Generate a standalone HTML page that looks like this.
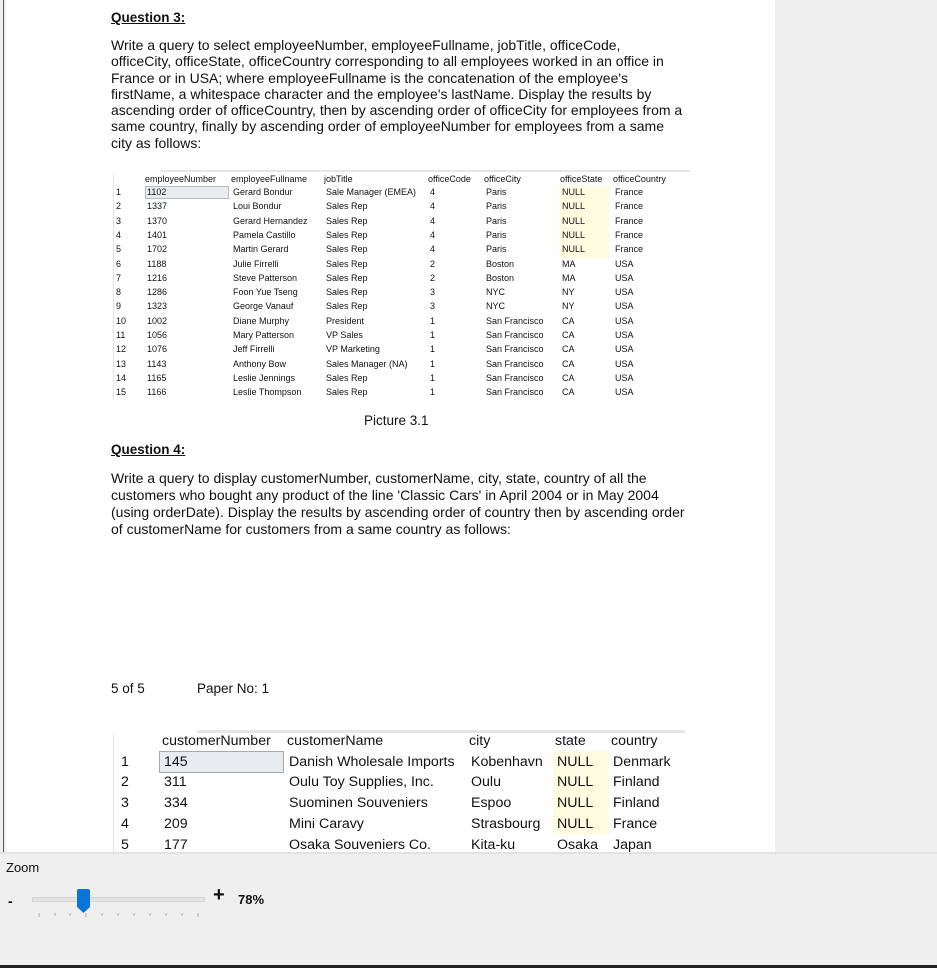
<!DOCTYPE html>
<html><head><meta charset="utf-8"><style>
*{margin:0;padding:0;box-sizing:border-box}
body{width:937px;height:968px;background:#efefef;position:relative;overflow:hidden;font-family:"Liberation Sans",Arial,sans-serif;color:#111}
.page{position:absolute;left:6px;top:0;width:769px;height:852px;background:#fff}
.lb{position:absolute;left:3px;top:0;width:1px;height:852px;background:#555}
.a{position:absolute;white-space:nowrap}
.q{font-weight:bold;text-decoration:underline;font-size:13.5px}
.p{font-size:14px;line-height:16.3px;left:111px;width:620px;white-space:nowrap}
.t1{position:absolute;font-size:9px;white-space:nowrap}
.t2{position:absolute;font-size:14.2px;white-space:nowrap}
</style></head><body>
<div class="page"></div>
<div class="lb"></div>
<div class="a q" style="left:111px;top:10px">Question 3:</div>
<div class="a p" style="top:37px">Write a query to select employeeNumber, employeeFullname, jobTitle, officeCode,<br>officeCity, officeState, officeCountry corresponding to all employees worked in an office in<br>France or in USA; where employeeFullname is the concatenation of the employee's<br>firstName, a whitespace character and the employee's lastName. Display the results by<br>ascending order of officeCountry, then by ascending order of officeCity for employees from a<br>same country, finally by ascending order of employeeNumber for employees from a same<br>city as follows:</div>

<div class="a" style="left:160px;top:170px;width:530px;height:2px;background:#e6e6e6"></div>
<div class="a" style="left:113px;top:174px;width:565px;height:226px;border-left:1px solid #e4e4e4"></div>
<div class="a" style="left:145px;top:186px;width:84px;height:13px;background:#e8ecf0;border:1px solid #bbb"></div>
<div class="a" style="left:559px;top:186px;width:50px;height:72px;background:#fffbe0"></div>
<div id="t1"></div>

<div class="a" style="left:364px;top:413px;font-size:13.5px">Picture 3.1</div>
<div class="a q" style="left:111px;top:442px">Question 4:</div>
<div class="a p" style="top:470px;line-height:17px">Write a query to display customerNumber, customerName, city, state, country of all the<br>customers who bought any product of the line 'Classic Cars' in April 2004 or in May 2004<br>(using orderDate). Display the results by ascending order of country then by ascending order<br>of customerName for customers from a same country as follows:</div>
<div class="a" style="left:111px;top:681px;font-size:13.5px">5 of 5</div>
<div class="a" style="left:197px;top:681px;font-size:13.5px">Paper No: 1</div>

<div class="a" style="left:197px;top:730px;width:488px;height:3px;background:#e6e6e6"></div>
<div class="a" style="left:113px;top:734px;width:570px;height:118px;border-left:1px solid #e4e4e4"></div>
<div class="a" style="left:159px;top:751px;width:125px;height:22px;background:#e8ecf0;border:1px solid #aaa"></div>
<div class="a" style="left:553px;top:751px;width:56px;height:83px;background:#fffbe0"></div>
<div id="t2"></div>

<div class="a" style="left:0;top:852px;width:937px;height:2px;background:#e2e2e2"></div>
<div class="a" style="left:6px;top:860px;font-size:13px">Zoom</div>
<div class="a" style="left:8px;top:893px;font-size:14px;font-weight:bold">-</div>
<div class="a" style="left:32px;top:897px;width:173px;height:5px;background:#e2e2e2;border:1px solid #d4d4d4"></div>
<svg class="a" style="left:76px;top:889px" width="16" height="25"><path d="M1 2 Q1 0 3 0 H12 Q14 0 14 2 V18 L7.5 24 L1 18Z" fill="#0a74da"/></svg>
<svg class="a" style="left:30px;top:912px" width="180" height="8">
<g stroke="#aaa" stroke-width="1">
<path d="M9 1v4M25 1v3M40 1v3M56 1v4M72 1v3M88 1v3M104 1v3M120 1v3M136 1v3M152 1v3M168 1v4"/></g></svg>
<div class="a" style="left:213px;top:884px;font-size:20px;font-weight:bold">+</div>
<div class="a" style="left:238px;top:892px;font-size:13px;font-weight:bold">78%</div>
<div class="a" style="left:0;top:965px;width:937px;height:3px;background:#222"></div>

<script>
var r1=[["1102","Gerard Bondur","Sale Manager (EMEA)","4","Paris","NULL","France"],
["1337","Loui Bondur","Sales Rep","4","Paris","NULL","France"],
["1370","Gerard Hernandez","Sales Rep","4","Paris","NULL","France"],
["1401","Pamela Castillo","Sales Rep","4","Paris","NULL","France"],
["1702","Martin Gerard","Sales Rep","4","Paris","NULL","France"],
["1188","Julie Firrelli","Sales Rep","2","Boston","MA","USA"],
["1216","Steve Patterson","Sales Rep","2","Boston","MA","USA"],
["1286","Foon Yue Tseng","Sales Rep","3","NYC","NY","USA"],
["1323","George Vanauf","Sales Rep","3","NYC","NY","USA"],
["1002","Diane Murphy","President","1","San Francisco","CA","USA"],
["1056","Mary Patterson","VP Sales","1","San Francisco","CA","USA"],
["1076","Jeff Firrelli","VP Marketing","1","San Francisco","CA","USA"],
["1143","Anthony Bow","Sales Manager (NA)","1","San Francisco","CA","USA"],
["1165","Leslie Jennings","Sales Rep","1","San Francisco","CA","USA"],
["1166","Leslie Thompson","Sales Rep","1","San Francisco","CA","USA"]];
var c1=[147,233,326,430,486,562,615],h1=["employeeNumber","employeeFullname","jobTitle","officeCode","officeCity","officeState","officeCountry"];
var s="";
h1.forEach(function(h,i){s+='<div class="t1" style="left:'+(c1[i]-2)+'px;top:174px">'+h+'</div>'});
r1.forEach(function(r,j){var y=187+j*14.3;s+='<div class="t1" style="left:116px;top:'+y+'px">'+(j+1)+'</div>';
r.forEach(function(v,i){s+='<div class="t1" style="left:'+c1[i]+'px;top:'+y+'px">'+v+'</div>'})});
document.getElementById("t1").innerHTML=s;
var r2=[["145","Danish Wholesale Imports","Kobenhavn","NULL","Denmark"],["311","Oulu Toy Supplies, Inc.","Oulu","NULL","Finland"],["334","Suominen Souveniers","Espoo","NULL","Finland"],["209","Mini Caravy","Strasbourg","NULL","France"],["177","Osaka Souveniers Co.","Kita-ku","Osaka","Japan"]];
var c2=[164,289,471,557,613],h2=["customerNumber","customerName","city","state","country"];
s="";
h2.forEach(function(h,i){s+='<div class="t2" style="left:'+(c2[i]-2)+'px;top:733px">'+h+'</div>'});
r2.forEach(function(r,j){var y=753.5+j*20.8;s+='<div class="t2" style="left:121px;top:'+y+'px">'+(j+1)+'</div>';
r.forEach(function(v,i){s+='<div class="t2" style="left:'+c2[i]+'px;top:'+y+'px">'+v+'</div>'})});
document.getElementById("t2").innerHTML=s;
</script>
</body></html>
